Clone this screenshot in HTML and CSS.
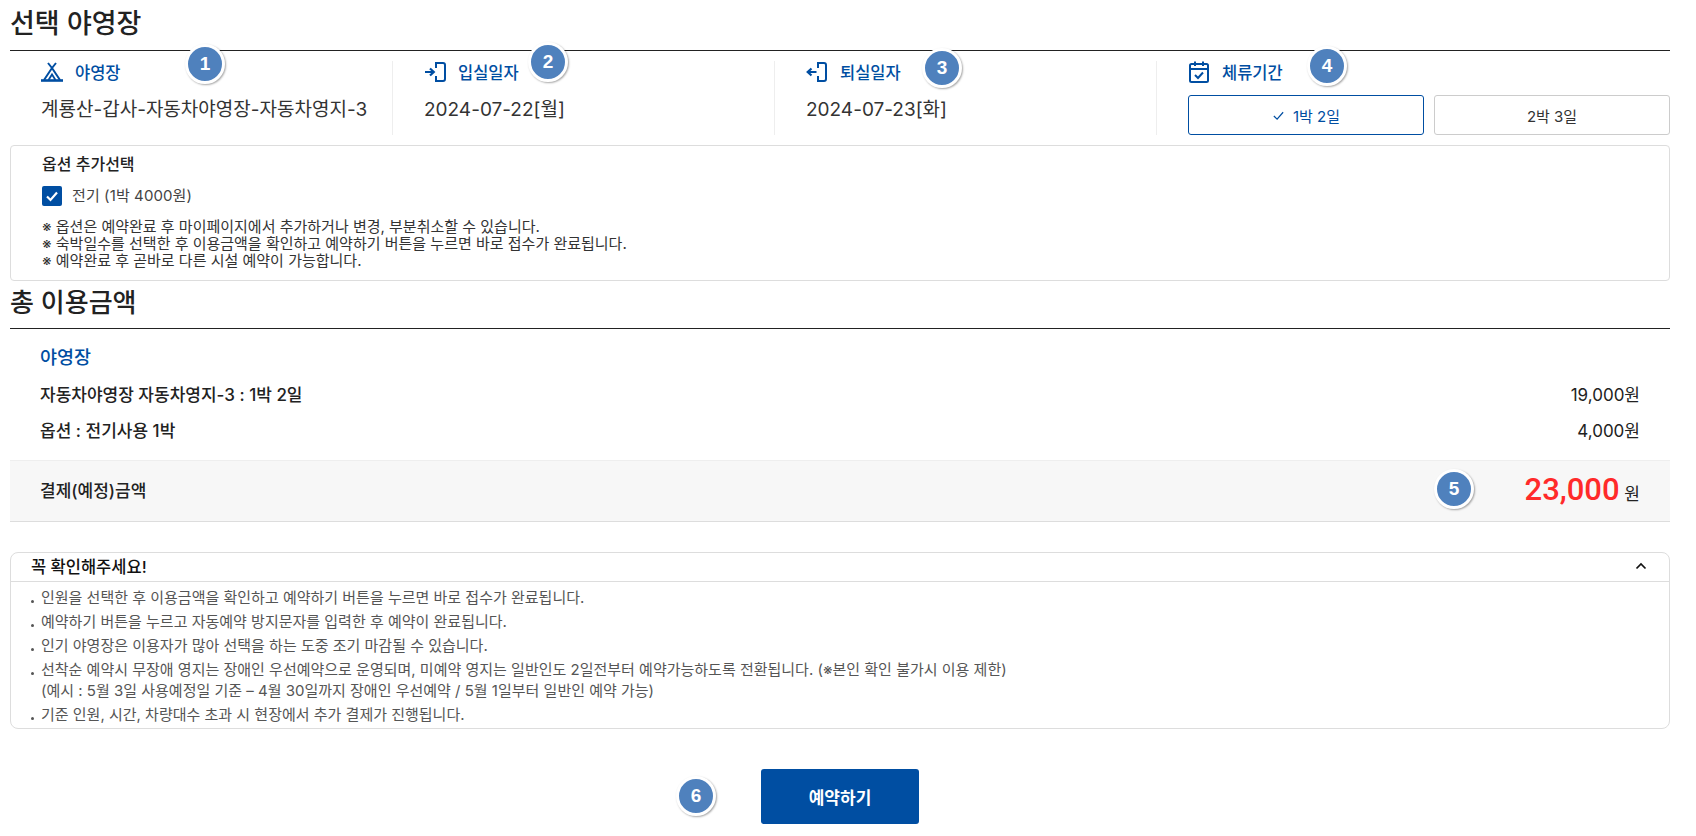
FILE: index.html
```html
<!DOCTYPE html>
<html lang="ko">
<head>
    <meta charset="UTF-8">
    <title>선택 야영장</title>
    <link rel="stylesheet" href="styles.css">
</head>
<body>
    <div class="page">

        <h2 class="title">선택 야영장</h2>
        <div class="info">
            <div class="info-col">
                <div class="info-label">
                    <svg class="ico" viewBox="0 0 22 22"><path d="M7 2 L11 7 L15 2 M11 7 L3 19 M11 7 L19 19" fill="none" stroke="#004ea2" stroke-width="2"/><path d="M0 19.5 H22" fill="none" stroke="#004ea2" stroke-width="2.6"/><path d="M7.5 19 L11 13.5 L14.5 19" fill="none" stroke="#004ea2" stroke-width="1.8"/></svg>
                    <span>야영장</span>
                </div>
                <div class="info-val">계룡산-갑사-자동차야영장-자동차영지-3</div>
            </div>
            <div class="info-col">
                <div class="info-label">
                    <svg class="ico" viewBox="0 0 22 22"><path d="M1 11 H9.5 M6 7.5 L9.8 11 L6 14.5" fill="none" stroke="#004ea2" stroke-width="2.2"/><path d="M12 7 V2 H19 Q21 2 21 4 V18 Q21 20 19 20 H12 V15" fill="none" stroke="#004ea2" stroke-width="2"/></svg>
                    <span>입실일자</span>
                </div>
                <div class="info-val">2024-07-22[월]</div>
            </div>
            <div class="info-col">
                <div class="info-label">
                    <svg class="ico" viewBox="0 0 22 22"><path d="M10.5 11 H2 M5.5 7.5 L1.7 11 L5.5 14.5" fill="none" stroke="#004ea2" stroke-width="2.2"/><path d="M12 7 V2 H18 Q20 2 20 4 V18 Q20 20 18 20 H12 V15" fill="none" stroke="#004ea2" stroke-width="2"/></svg>
                    <span>퇴실일자</span>
                </div>
                <div class="info-val">2024-07-23[화]</div>
            </div>
            <div class="info-col">
                <div class="info-label">
                    <svg class="ico" viewBox="0 0 22 22"><rect x="2" y="3" width="18" height="18" rx="1.5" fill="none" stroke="#004ea2" stroke-width="2"/><path d="M2 8 H20 M7 0.5 V5 M15 0.5 V5 M7 14 L10 17 L15 11.5" fill="none" stroke="#004ea2" stroke-width="2"/></svg>
                    <span>체류기간</span>
                </div>
                <div class="stay-btns">
                    <div class="stay-btn on">
                        <svg class="stay-check" viewBox="0 0 14 14"><path d="M2 7.5 L5.5 11 L12 3.5" fill="none" stroke="#004ea2" stroke-width="1.3"/></svg>
                        1박 2일
                    </div>
                    <div class="stay-btn">2박 3일</div>
                </div>
            </div>
        </div>

        <div class="option-box">
            <div class="option-title">옵션 추가선택</div>
            <div class="option-check">
                <span class="checkbox">
                    <svg viewBox="0 0 20 20"><path d="M5 10.5 L8.5 14 L15 6.5" fill="none" stroke="#fff" stroke-width="2.2"/></svg>
                </span>
                <span class="option-label">전기 (1박 4000원)</span>
            </div>
            <p class="option-note">※ 옵션은 예약완료 후 마이페이지에서 추가하거나 변경, 부분취소할 수 있습니다.</p>
            <p class="option-note">※ 숙박일수를 선택한 후 이용금액을 확인하고 예약하기 버튼을 누르면 바로 접수가 완료됩니다.</p>
            <p class="option-note">※ 예약완료 후 곧바로 다른 시설 예약이 가능합니다.</p>
        </div>

        <h2 class="title title-total">총 이용금액</h2>
        <div class="total">
            <div class="total-head">야영장</div>
            <div class="total-row">
                <strong>자동차야영장 자동차영지-3 : 1박 2일</strong>
                <span>19,000원</span>
            </div>
            <div class="total-row">
                <strong>옵션 : 전기사용 1박</strong>
                <span>4,000원</span>
            </div>
        </div>
        <div class="pay">
            <strong>결제(예정)금액</strong>
            <span class="pay-sum"><em>23,000</em> 원</span>
        </div>

        <div class="notice">
            <div class="notice-head">
                <span>꼭 확인해주세요!</span>
                <svg class="notice-arrow" viewBox="0 0 12 8"><path d="M1.5 6.5 L6 2 L10.5 6.5" fill="none" stroke="#111" stroke-width="1.7"/></svg>
            </div>
            <ul class="notice-list">
                <li>인원을 선택한 후 이용금액을 확인하고 예약하기 버튼을 누르면 바로 접수가 완료됩니다.</li>
                <li>예약하기 버튼을 누르고 자동예약 방지문자를 입력한 후 예약이 완료됩니다.</li>
                <li>인기 야영장은 이용자가 많아 선택을 하는 도중 조기 마감될 수 있습니다.</li>
                <li>선착순 예약시 무장애 영지는 장애인 우선예약으로 운영되며, 미예약 영지는 일반인도 2일전부터 예약가능하도록 전환됩니다. (※본인 확인 불가시 이용 제한)<br>(예시 : 5월 3일 사용예정일 기준 – 4월 30일까지 장애인 우선예약 / 5월 1일부터 일반인 예약 가능)</li>
                <li>기준 인원, 시간, 차량대수 초과 시 현장에서 추가 결제가 진행됩니다.</li>
            </ul>
        </div>

        <div class="btn-wrap">
            <div class="reserve-btn">예약하기</div>
        </div>

        <!-- numbered markers over the screenshot -->
        <span class="badge b1">1</span>
        <span class="badge b2">2</span>
        <span class="badge b3">3</span>
        <span class="badge b4">4</span>
        <span class="badge b5">5</span>
        <span class="badge b6">6</span>
    </div>
</body>
</html>
```
FILE: styles.css
```css
* {
    margin: 0;
    padding: 0;
    box-sizing: border-box;
}

body {
    font-family: Inter, "Noto Sans CJK KR", sans-serif;
    color: #222;
    background: #fff;
}

.page {
    position: relative;
    width: 1696px;
    height: 836px;
    padding: 0 26px 0 10px;
    overflow: hidden;
}

.title {
    height: 51px;
    padding-top: 6px;
    font-size: 27px;
    line-height: 36px;
    font-weight: 500;
    color: #222;
    border-bottom: 1px solid #222;
}

.title-total {
    height: 48px;
    padding-top: 4px;
    font-size: 26px;
}

/* selected site info */
.info {
    display: grid;
    grid-template-columns: repeat(4, 1fr);
    padding-top: 10px;
}

.info-col {
    height: 74px;
    padding-left: 31px;
    border-left: 1px solid #eee;
}

.info-col:first-child {
    border-left: none;
    padding-left: 31px;
}

.info-label {
    display: flex;
    align-items: center;
    gap: 12px;
    height: 22px;
    font-size: 16.5px;
    font-weight: 500;
    color: #004ea2;
}

.ico {
    width: 22px;
    height: 22px;
}

.info-val {
    margin-top: 14px;
    font-size: 19px;
    line-height: 26px;
    color: #333;
}

.stay-btns {
    display: grid;
    grid-template-columns: 236px 236px;
    gap: 10px;
    margin-top: 12px;
}

.stay-btn {
    display: flex;
    align-items: center;
    justify-content: center;
    gap: 8px;
    height: 40px;
    font-size: 15px;
    color: #333;
    background: #fff;
    border: 1px solid #ccc;
    border-radius: 3px;
}

.stay-btn.on {
    color: #004ea2;
    border-color: #004ea2;
}

.stay-check {
    width: 13px;
    height: 13px;
}

/* option box */
.option-box {
    height: 136px;
    margin-top: 10px;
    padding: 7px 31px 0;
    border: 1px solid #ddd;
    border-radius: 4px;
}

.option-title {
    font-size: 16px;
    line-height: 22px;
    font-weight: 500;
    color: #222;
}

.option-check {
    display: flex;
    align-items: center;
    gap: 10px;
    margin-top: 11px;
    margin-bottom: 12px;
    height: 20px;
    font-size: 15px;
    color: #444;
}

.option-label {
    padding-bottom: 4px;
    letter-spacing: 0.1px;
}

.checkbox {
    width: 20px;
    height: 20px;
    background: #004ea2;
    border-radius: 2px;
}

.checkbox svg {
    display: block;
}

.option-note {
    font-size: 15px;
    line-height: 17px;
    color: #333;
}

/* total */
.total {
    padding: 0 30px;
}

.total-head {
    height: 54px;
    padding-top: 15px;
    font-size: 18.5px;
    line-height: 26px;
    font-weight: 500;
    color: #004ea2;
}

.total-row {
    display: flex;
    justify-content: space-between;
    height: 36px;
    font-size: 17px;
    line-height: 24px;
    color: #222;
}

.total-row strong,
.pay strong {
    font-weight: 500;
}

.pay {
    display: flex;
    justify-content: space-between;
    align-items: center;
    height: 62px;
    margin-top: 5px;
    padding: 0 30px 3px;
    font-size: 17px;
    background: #f7f7f7;
    border-top: 1px solid #eee;
    border-bottom: 1px solid #ddd;
}

.pay-sum {
    font-size: 17px;
}

.pay-sum em {
    font-family: Roboto, sans-serif;
    font-style: normal;
    font-size: 31px;
    font-weight: 500;
    color: #ff2a2a;
}

/* notice */
.notice {
    height: 177px;
    margin-top: 30px;
    border: 1px solid #ddd;
    border-radius: 8px;
}

.notice-head {
    display: flex;
    justify-content: space-between;
    align-items: center;
    height: 29px;
    padding: 0 22px 2px 20px;
    font-size: 16.5px;
    font-weight: 500;
    color: #111;
    border-bottom: 1px solid #ddd;
}

.notice-arrow {
    width: 12px;
    height: 8px;
}

.notice-list {
    list-style: none;
    padding: 5px 0 0 20px;
}

.notice-list li {
    position: relative;
    padding-left: 10px;
    font-size: 15px;
    line-height: 21px;
    color: #555;
}

.notice-list li + li {
    margin-top: 3px;
}

.notice-list li::before {
    content: '';
    position: absolute;
    left: 0;
    top: 13px;
    width: 3px;
    height: 3px;
    border-radius: 50%;
    background: #555;
}

/* reserve button */
.btn-wrap {
    display: flex;
    justify-content: center;
    margin-top: 40px;
}

.reserve-btn {
    display: flex;
    align-items: center;
    justify-content: center;
    width: 158px;
    height: 55px;
    font-size: 17px;
    font-weight: 700;
    color: #fff;
    background: #004ea2;
    border-radius: 3px;
}

.badge {
    position: absolute;
    display: flex;
    align-items: center;
    justify-content: center;
    width: 34px;
    height: 34px;
    font-family: "Liberation Sans", sans-serif;
    font-size: 19px;
    font-weight: 700;
    color: #fff;
    background: #4f81bd;
    border: 3px solid #fff;
    border-radius: 50%;
    box-sizing: content-box;
    box-shadow: 1px 1px 2px rgba(0, 0, 0, 0.35);
}

.b1 { left: 185px; top: 44px; }
.b2 { left: 528px; top: 42px; }
.b3 { left: 922px; top: 48px; }
.b4 { left: 1307px; top: 46px; }
.b5 { left: 1434px; top: 469px; }
.b6 { left: 676px; top: 776px; }
```
